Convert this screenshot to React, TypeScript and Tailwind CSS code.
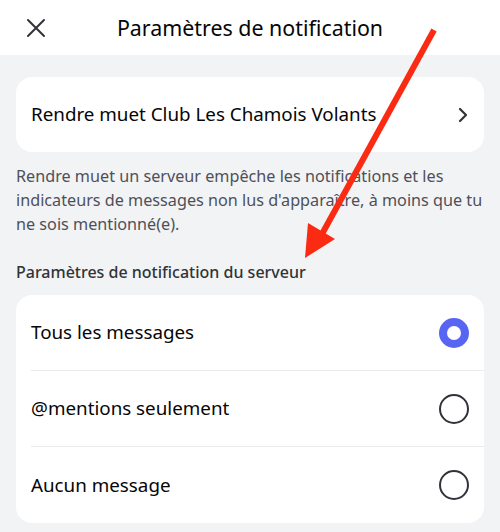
import React from "react";

const font = { fontFamily: '"Noto Sans", "Open Sans", sans-serif' };

function Radio({ checked }: { checked?: boolean }) {
  if (checked) {
    return (
      <div className="w-[30px] h-[30px] rounded-full bg-[#5865f2] flex items-center justify-center">
        <div className="w-[14px] h-[14px] rounded-full bg-white" />
      </div>
    );
  }
  return <div className="w-[30px] h-[30px] rounded-full border-2 border-[#313338]" />;
}

export default function App() {
  const options = [
    { label: "Tous les messages", checked: true },
    { label: "@mentions seulement", checked: false },
    { label: "Aucun message", checked: false },
  ];
  return (
    <div
      className="relative w-[500px] h-[532px] overflow-hidden bg-[#f2f3f5] text-[#060607]"
      style={font}
    >
      <header className="h-[55px] bg-white flex items-center relative">
        <div className="w-[71px] flex items-center justify-center">
          <svg width="20" height="20" viewBox="0 0 20 20" fill="none">
            <path d="M2 2L18 18M18 2L2 18" stroke="#313338" strokeWidth="2" strokeLinecap="round" />
          </svg>
        </div>
        <h1 className="absolute left-0 right-0 text-center text-[21.4px] font-normal leading-none pointer-events-none">
          Paramètres de notification
        </h1>
      </header>

      <div className="px-4 pt-[22px]">
        <div className="bg-white rounded-[16px] h-[75px] flex items-center justify-between pl-[15px] pr-[16px]">
          <span className="text-[18.8px] font-normal">Rendre muet Club Les Chamois Volants</span>
          <svg width="10" height="16" viewBox="0 0 10 16" fill="none">
            <path d="M2 2L8 8L2 14" stroke="#313338" strokeWidth="2.2" strokeLinecap="round" strokeLinejoin="round" />
          </svg>
        </div>

        <p className="mt-3 text-[16.2px] leading-[24px] text-[#4e5058]">
          Rendre muet un serveur empêche les notifications et les indicateurs de messages non lus
          d'apparaître, à moins que tu ne sois mentionné(e).
        </p>

        <h2 className="mt-[26px] text-[16px] leading-[20px] font-medium text-[#313338]">
          Paramètres de notification du serveur
        </h2>

        <div className="mt-[13px] bg-white rounded-[16px] overflow-hidden">
          {options.map((o, i) => (
            <div key={o.label} className="pl-[15px]">
              <div
                className={
                  "h-[76px] flex items-center justify-between pr-[15px] " +
                  (i < options.length - 1 ? "border-b border-[#ebebed]" : "")
                }
              >
                <span className="text-[18.8px] font-normal">{o.label}</span>
                <Radio checked={o.checked} />
              </div>
            </div>
          ))}
        </div>
      </div>

      <svg
        className="absolute left-0 top-0 pointer-events-none"
        width="500"
        height="532"
        viewBox="0 0 500 532"
      >
        <line x1="434" y1="30" x2="322" y2="234" stroke="#fb2a12" strokeWidth="6" />
        <polygon points="305,258 308,223 335,239" fill="#fb2a12" />
      </svg>
    </div>
  );
}
